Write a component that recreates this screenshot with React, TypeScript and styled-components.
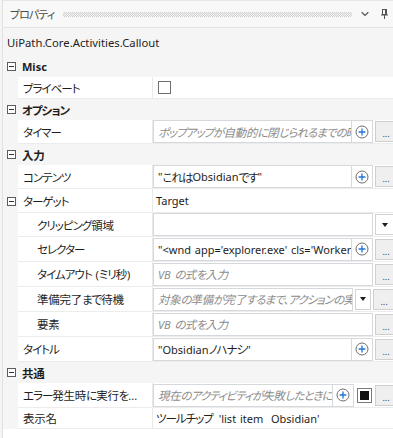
import React, { FC, ReactNode } from 'react';
import styled, { createGlobalStyle } from 'styled-components';

const GlobalStyle = createGlobalStyle`
  html, body {
    margin: 0;
    padding: 0;
    background: #f5f5f5;
  }
  body {
    width: 393px;
    height: 438px;
    overflow: hidden;
    font-family: "Noto Sans", "Noto Sans CJK JP", sans-serif;
    font-size: 11px;
    color: #1e1e1e;
    word-spacing: 1px;
    font-feature-settings: "palt" 1;
  }
`;

// Japanese runs: Meiryo UI-like proportions (full kanji, narrow kana)
const Cjk = styled.span<{ $kana: boolean }>`
  font-family: "Noto Sans CJK JP", sans-serif;
  font-size: 1.045em;
  letter-spacing: ${(p) => (p.$kana ? '-0.085em' : '-0.02em')};
`;

const CJK_RE = /([\u3000-\u30ff\u3400-\u9fff\uff00-\uffef]+)/;
const KANA_RE = /([\u3000-\u30ff\uff00-\uffef]+)/;

const T: FC<{ children: string }> = ({ children }) => (
  <>
    {children.split(CJK_RE).map((part, i) =>
      i % 2
        ? part.split(KANA_RE).map((p, j) =>
            p ? (
              <Cjk key={`${i}-${j}`} $kana={j % 2 === 1}>
                {p}
              </Cjk>
            ) : null,
          )
        : part,
    )}
  </>
);

const Panel = styled.div`
  margin-left: 2px;
  width: 390px;
  height: 438px;
  border-left: 1px solid #e1e1e1;
  display: flex;
  flex-direction: column;
  overflow: hidden;
  background: #f5f5f5;
`;

const TitleBar = styled.div`
  box-sizing: border-box;
  height: 28px;
  display: flex;
  align-items: center;
  padding: 0 5px 0 7px;
  background: #f8f8f8;
  border-top: 1px solid #e6e6e6;
  border-bottom: 1px solid #e3e3e3;
`;

const TitleText = styled.span`
  font-size: 10.5px;
  color: #4a4a4a;
`;

const Grip = styled.div`
  flex: 1;
  height: 5px;
  margin: 0 9px;
  background: repeating-conic-gradient(#cdcdcd 0% 25%, transparent 0% 50%) 0 0 / 2px 2px;
`;

const IconSlot = styled.span<{ $gap?: number }>`
  display: flex;
  align-items: center;
  margin-left: ${(p) => p.$gap ?? 0}px;
`;

const Header = styled.div`
  height: 28px;
  display: flex;
  align-items: center;
  padding-left: 4px;
  font-size: 11.3px;
  word-spacing: 0;
`;

const Toggle = styled.span`
  position: relative;
  box-sizing: border-box;
  width: 9px;
  height: 9px;
  border: 1px solid #5c5c5c;
  background: #fff;
  flex: none;
  &::after {
    content: '';
    position: absolute;
    left: 1px;
    right: 1px;
    top: 3px;
    height: 1px;
    background: #333;
  }
`;

const CategoryRow = styled.div`
  height: 21px;
  display: flex;
  align-items: center;
  padding-left: 4px;
  gap: 6px;
  font-weight: 700;
`;

const PropRow = styled.div<{ $h: number }>`
  display: grid;
  grid-template-columns: 15px 135px 1fr;
  height: ${(p) => p.$h}px;
`;

const Gutter = styled.div`
  display: flex;
  align-items: center;
  padding-left: 4px;
`;

const LabelCell = styled.div<{ $indent: number }>`
  box-sizing: border-box;
  display: flex;
  align-items: center;
  padding-left: ${(p) => p.$indent}px;
  background: #fff;
  border-bottom: 1px solid #ececec;
  border-right: 1px solid #e9e9e9;
  white-space: pre;
  overflow: hidden;
`;

const ValueCell = styled.div<{ $pad?: number }>`
  box-sizing: border-box;
  display: flex;
  align-items: center;
  gap: 2px;
  padding-left: ${(p) => p.$pad ?? 0}px;
  background: #fff;
  border-bottom: 1px solid #ececec;
  white-space: pre;
  overflow: hidden;
`;

const TextBox = styled.div<{ $w: number }>`
  box-sizing: border-box;
  width: ${(p) => p.$w}px;
  height: 23px;
  flex: none;
  display: flex;
  border: 1px solid #d5d9de;
  background: #fff;
`;

const Field = styled.div<{ $ph?: boolean }>`
  flex: 1;
  min-width: 0;
  display: flex;
  align-items: center;
  padding-left: 4px;
  overflow: hidden;
  white-space: pre;
  color: ${(p) => (p.$ph ? '#8c8c8c' : '#1e1e1e')};
  font-style: ${(p) => (p.$ph ? 'italic' : 'normal')};
`;

const PlusPart = styled.div`
  width: 20px;
  flex: none;
  display: flex;
  align-items: center;
  justify-content: center;
  border-left: 1px solid #d5d9de;
`;

const DotsButton = styled.div`
  box-sizing: border-box;
  width: 22px;
  height: 21px;
  flex: none;
  display: flex;
  align-items: flex-end;
  justify-content: center;
  padding-bottom: 3px;
  background: #efefef;
  border: 1px solid #cfcfcf;
  font-size: 9px;
  line-height: 9px;
  color: #444;
`;

const DropButton = styled.div<{ $w: number }>`
  box-sizing: border-box;
  width: ${(p) => p.$w}px;
  height: 21px;
  flex: none;
  display: flex;
  align-items: center;
  justify-content: center;
  background: #fff;
  border: 1px solid #d3d3d3;
  &::after {
    content: '';
    border-left: 3.5px solid transparent;
    border-right: 3.5px solid transparent;
    border-top: 4px solid #1e1e1e;
  }
`;

const ColorButton = styled.div`
  box-sizing: border-box;
  width: 15px;
  height: 15px;
  margin: 0 1px;
  flex: none;
  padding: 2px;
  border: 1px solid #7a7a7a;
  background: #fff;
  &::after {
    content: '';
    display: block;
    width: 100%;
    height: 100%;
    background: #111;
  }
`;

const CheckBox = styled.span`
  box-sizing: border-box;
  width: 13px;
  height: 13px;
  border: 1px solid #6f6f6f;
  background: #fff;
`;

const Footer = styled.div`
  flex: 1;
  background: #fff;
`;

const PlusIcon: FC = () => (
  <svg width="14" height="14" viewBox="0 0 14 14">
    <circle cx="7" cy="7" r="6" fill="#fff" stroke="#6e6e6e" strokeWidth="1" />
    <path d="M7 3.6v6.8M3.6 7h6.8" stroke="#1f74d6" strokeWidth="1.3" />
  </svg>
);

const ChevronIcon: FC = () => (
  <svg width="8" height="6" viewBox="0 0 8 6">
    <path d="M0.7 1.2L4 4.4l3.3-3.2" fill="none" stroke="#555" strokeWidth="1.2" />
  </svg>
);

const PinIcon: FC = () => (
  <svg width="7" height="10" viewBox="0 0 7 10">
    <rect x="1.5" y="0.5" width="4" height="5" fill="none" stroke="#555" />
    <path d="M4.5 1v4.5" stroke="#555" />
    <path d="M0 6h7" stroke="#555" />
    <path d="M3.5 6v4" stroke="#555" />
  </svg>
);

interface IRowProps {
  label: string;
  h: number;
  indent?: number;
  expander?: boolean;
  pad?: number;
  children?: ReactNode;
}

const Row: FC<IRowProps> = ({ label, h, indent = 5, expander, pad, children }) => (
  <PropRow $h={h}>
    <Gutter>{expander && <Toggle />}</Gutter>
    <LabelCell $indent={indent}>
      <T>{label}</T>
    </LabelCell>
    <ValueCell $pad={pad}>{children}</ValueCell>
  </PropRow>
);

interface IEditorProps {
  w?: number;
  text?: string;
  ph?: boolean;
  plus?: boolean;
}

const Editor: FC<IEditorProps> = ({ w = 220, text = '', ph, plus }) => (
  <TextBox $w={w}>
    <Field $ph={ph}>
      <T>{text}</T>
    </Field>
    {plus && (
      <PlusPart>
        <PlusIcon />
      </PlusPart>
    )}
  </TextBox>
);

const Category: FC<{ title: string }> = ({ title }) => (
  <CategoryRow>
    <Toggle />
    <span>
      <T>{title}</T>
    </span>
  </CategoryRow>
);

const Dots = () => <DotsButton>...</DotsButton>;

export default function App() {
  return (
    <>
      <GlobalStyle />
      <Panel>
        <TitleBar>
          <TitleText>
            <T>プロパティ</T>
          </TitleText>
          <Grip />
          <IconSlot>
            <ChevronIcon />
          </IconSlot>
          <IconSlot $gap={12}>
            <PinIcon />
          </IconSlot>
        </TitleBar>
        <Header>UiPath.Core.Activities.Callout</Header>

        <Category title="Misc" />
        <Row label="プライベート" h={22} pad={5}>
          <CheckBox />
        </Row>

        <Category title="オプション" />
        <Row label="タイマー" h={24}>
          <Editor ph plus text="ポップアップが自動的に閉じられるまでの時間 (ミリ秒)" />
          <Dots />
        </Row>

        <Category title="入力" />
        <Row label="コンテンツ" h={24}>
          <Editor plus text={'"これはObsidianです"'} />
          <Dots />
        </Row>
        <Row label="ターゲット" h={24} expander pad={3}>
          Target
        </Row>
        <Row label="クリッピング領域" h={24} indent={19}>
          <Editor />
          <DropButton $w={20} />
        </Row>
        <Row label="セレクター" h={25} indent={19}>
          <Editor plus text={`"<wnd app='explorer.exe' cls='WorkerW' />`} />
          <Dots />
        </Row>
        <Row label="タイムアウト (ミリ秒)" h={25} indent={19}>
          <Editor ph text="VB の式を入力" />
          <Dots />
        </Row>
        <Row label="準備完了まで待機" h={25} indent={19}>
          <Editor w={200} ph text="対象の準備が完了するまで、アクションの実行を待機します" />
          <DropButton $w={16} />
          <Dots />
        </Row>
        <Row label="要素" h={25} indent={19}>
          <Editor ph text="VB の式を入力" />
          <Dots />
        </Row>
        <Row label="タイトル" h={25}>
          <Editor plus text={'"Obsidianノハナシ"'} />
          <Dots />
        </Row>

        <Category title="共通" />
        <Row label="エラー発生時に実行を..." h={25}>
          <Editor w={201} ph plus text="現在のアクティビティが失敗したときに実行を継続" />
          <ColorButton />
          <Dots />
        </Row>
        <Row label="表示名" h={21} pad={3}>
          <T>{"ツールチップ 'list item  Obsidian'"}</T>
        </Row>
        <Footer />
      </Panel>
    </>
  );
}
